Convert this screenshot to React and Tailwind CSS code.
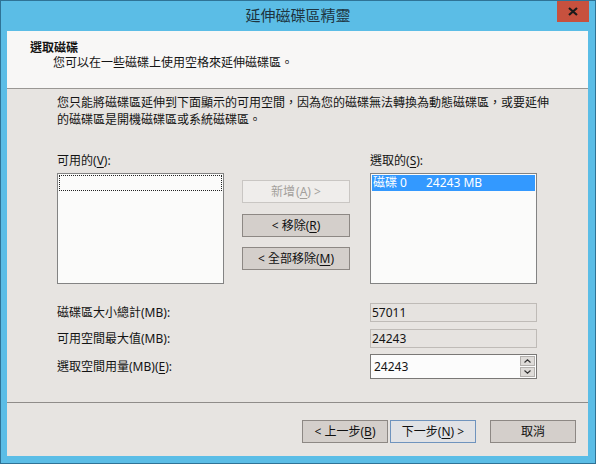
import React from 'react';

const font = { fontFamily: '"Noto Sans", "Noto Sans CJK TC", sans-serif' };

function Key({ k }) {
  return (
    <>
      (<span className="underline underline-offset-2">{k}</span>)
    </>
  );
}

function Btn({ children, disabled, focused, className = '' }) {
  let look = 'bg-[#d4cfcb] border-[#8d8884] text-[#111]';
  if (disabled) look = 'bg-[#efedeb] border-[#c9c6c3] text-[#a3a09c]';
  if (focused) look = 'bg-[#e1e2e5] border-[#6f93bd] text-[#111]';
  return (
    <div className={`h-[23px] w-[86px] border flex items-center justify-center text-[12px] leading-none ${look} ${className}`}>
      {children}
    </div>
  );
}

export default function App() {
  return (
    <div style={font} className="w-[596px] h-[464px] bg-[#5bbde6] border border-[#2f7396] flex flex-col relative text-[#141414] overflow-hidden">
      {/* title bar */}
      <div className="h-[30px] shrink-0 flex items-center justify-center text-[15px] text-[#1d3440] pb-[1px]">
        延伸磁碟區精靈
      </div>
      <div className="absolute top-0 right-[6px] w-[32px] h-[21px] bg-[#c7513e] flex items-center justify-center">
        <svg width="10" height="9" viewBox="0 0 10 9">
          <path d="M1 1 L9 8 M9 1 L1 8" stroke="#1b1b1b" strokeWidth="2.2" />
        </svg>
      </div>

      {/* client area */}
      <div className="flex-1 ml-[6px] mr-[7px] mb-[7px] flex flex-col bg-[#e7e4e1]">
        <div className="h-[58px] shrink-0 bg-[#f8f7f6] border-b border-[#9a9794] pl-[23px] pt-[9px] leading-[15px] text-[12px]">
          <div className="font-bold">選取磁碟</div>
          <div className="pl-[23px]">您可以在一些磁碟上使用空格來延伸磁碟區。</div>
        </div>

        <div className="h-[313px] shrink-0 pl-[50px] flex flex-col text-[12px]">
          <div className="mt-[5px] leading-[17px] whitespace-nowrap">
            您只能將磁碟區延伸到下面顯示的可用空間，因為您的磁碟無法轉換為動態磁碟區，或要延伸
            <br />
            的磁碟區是開機磁碟區或系統磁碟區。
          </div>

          <div className="mt-[24px] flex">
            <div className="w-[167px] flex flex-col">
              <div className="leading-[17px]">可用的<Key k="V" />:</div>
              <div className="mt-[4px] h-[111px] border border-[#838383] bg-[#fbfbfa] p-[1px]">
                <div className="h-[16px] border border-dotted border-[#222]" />
              </div>
            </div>

            <div className="ml-[18px] w-[108px] pt-[28px] flex flex-col gap-[11px]">
              <Btn disabled className="w-[108px]">新增<span className="ml-[1px]"><Key k="A" /></span>&nbsp;&gt;</Btn>
              <Btn className="w-[108px]">&lt; 移除<Key k="R" /></Btn>
              <Btn className="w-[108px] -mt-[1px]">&lt; 全部移除<Key k="M" /></Btn>
            </div>

            <div className="ml-[20px] w-[167px] flex flex-col">
              <div className="leading-[17px]">選取的<Key k="S" />:</div>
              <div className="mt-[4px] h-[111px] border border-[#838383] bg-[#fbfbfa] p-[1px]">
                <div className="h-[16px] bg-[#3399ff] text-white flex items-center pl-[1px] leading-none">
                  <span className="w-[53px]">磁碟 0</span>
                  <span>24243 MB</span>
                </div>
              </div>
            </div>
          </div>

          <div className="mt-[19px] flex flex-col">
            <div className="flex items-center h-[19px]">
              <div className="w-[313px]">磁碟區大小總計(MB):</div>
              <div className="w-[167px] h-[19px] border border-[#bfbbb7] bg-[#e6e3e0] flex items-center pl-[1px] leading-none">57011</div>
            </div>
            <div className="flex items-center h-[19px] mt-[7px]">
              <div className="w-[313px]">可用空間最大值(MB):</div>
              <div className="w-[167px] h-[19px] border border-[#bfbbb7] bg-[#e6e3e0] flex items-center pl-[1px] leading-none">24243</div>
            </div>
            <div className="flex items-center h-[25px] mt-[6px]">
              <div className="w-[313px]">選取空間用量(MB)<Key k="E" />:</div>
              <div className="w-[167px] h-[25px] border border-[#7a7876] bg-[#fcfcfc] flex">
                <div className="flex-1 flex items-center pl-[3px] leading-none">24243</div>
                <div className="w-[16px] flex flex-col gap-[1px] p-[1px] pl-0">
                  <div className="flex-1 bg-[#dedbd8] border border-[#b3b0ad] flex items-center justify-center">
                    <svg width="7" height="4" viewBox="0 0 7 4"><path d="M0.5 3.5 L3.5 0.8 L6.5 3.5" fill="none" stroke="#333" strokeWidth="1.2" /></svg>
                  </div>
                  <div className="flex-1 bg-[#dedbd8] border border-[#b3b0ad] flex items-center justify-center">
                    <svg width="7" height="4" viewBox="0 0 7 4"><path d="M0.5 0.5 L3.5 3.2 L6.5 0.5" fill="none" stroke="#333" strokeWidth="1.2" /></svg>
                  </div>
                </div>
              </div>
            </div>
          </div>
        </div>

        <div className="flex-1 border-t border-[#8f8c89] flex justify-end items-start pt-[17px] pr-[12px]">
          <Btn>&lt; 上一步<Key k="B" /></Btn>
          <Btn focused className="ml-[2px]">下一步<Key k="N" />&nbsp;&gt;</Btn>
          <Btn className="ml-[14px]">取消</Btn>
        </div>
      </div>
    </div>
  );
}
